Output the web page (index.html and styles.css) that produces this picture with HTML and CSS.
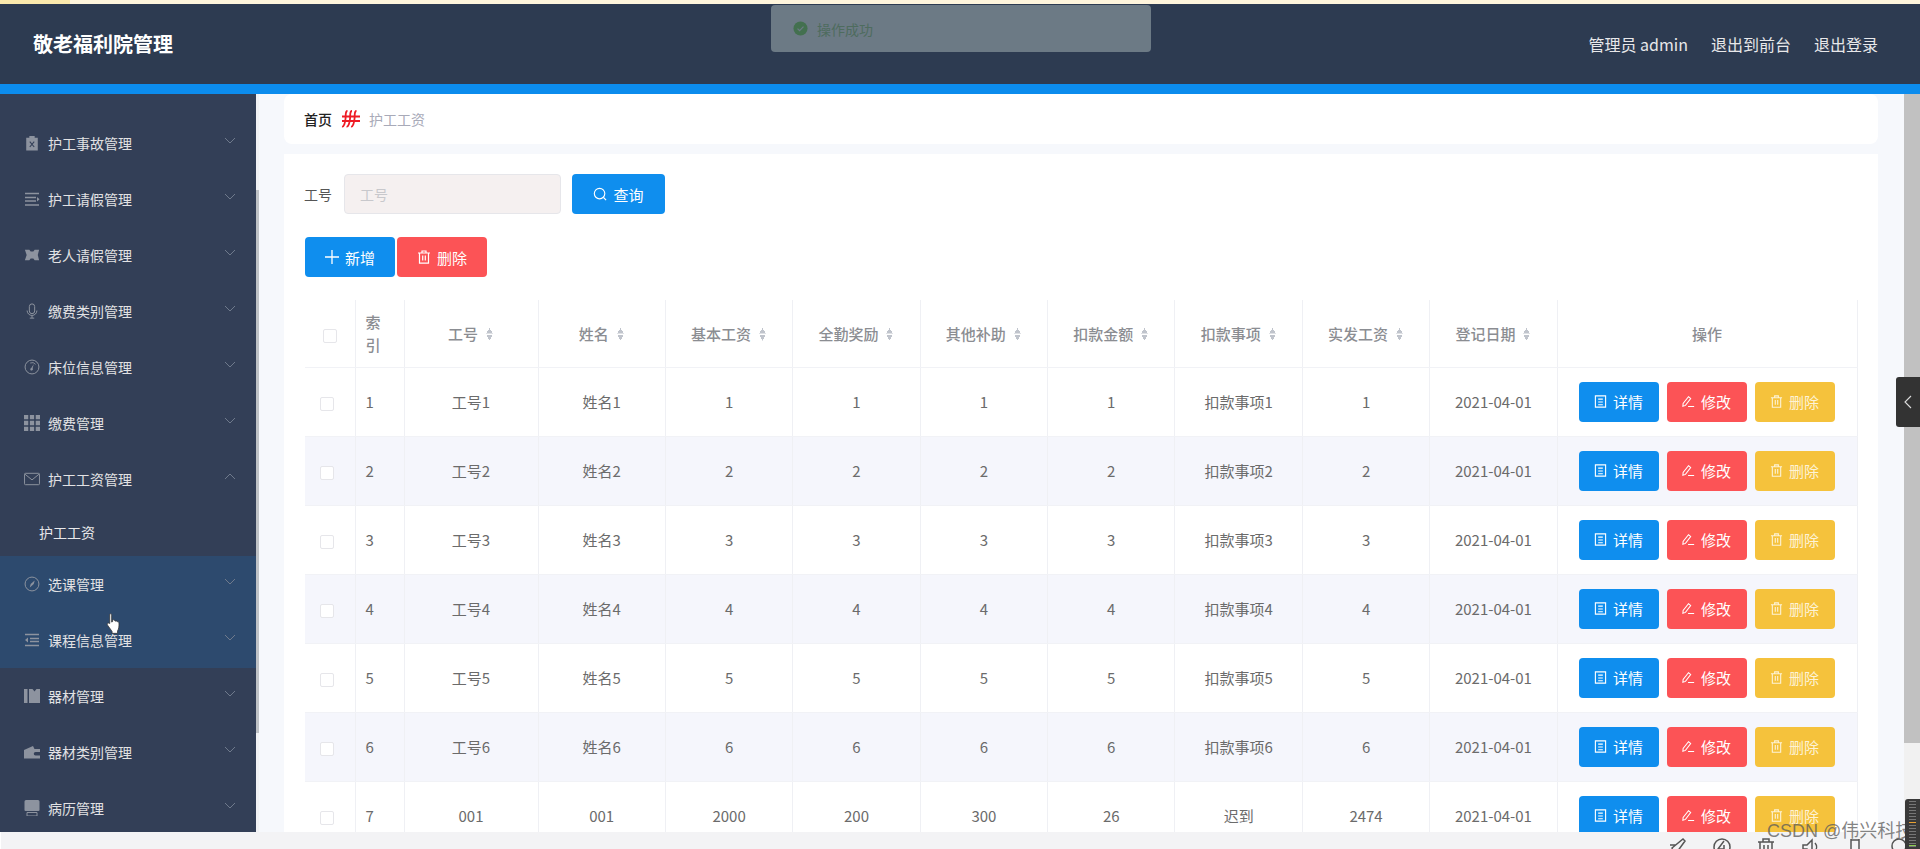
FILE: index.html
```html
<!DOCTYPE html>
<html lang="zh-CN">
<head>
<meta charset="utf-8">
<title>敬老福利院管理</title>
<link rel="stylesheet" href="styles.css">
</head>
<body>
<svg class="defs" width="0" height="0" aria-hidden="true">
  <symbol id="i-clip" viewBox="0 0 16 18"><path d="M5 1h6v2h3.500v14.500h-13V3H5z" fill="currentColor"/><path d="M5.500 7.500l5 6m0-6l-5 6" stroke="#333f57" stroke-width="1.200" fill="none"/></symbol>
  <symbol id="i-list" viewBox="0 0 16 16"><path d="M1 2.500h14M1 6.500h11M1 10h11M1 14h14" stroke="currentColor" stroke-width="1.700" fill="none"/><path d="M13 6l2.500 2.200L13 10.500z" fill="currentColor"/></symbol>
  <symbol id="i-ticket" viewBox="0 0 18 14"><path d="M1 1h5l1.500 2h3L12 1h5l-1.500 6L17 13h-5l-1.500-2h-3L6 13H1l2-6z" fill="currentColor"/></symbol>
  <symbol id="i-mic" viewBox="0 0 16 18"><rect x="5" y="1" width="6" height="11" rx="3" fill="none" stroke="currentColor" stroke-width="1.100"/><path d="M2.500 8.500a5.500 5.500 0 0 0 11 0M8 14v3M5.500 17h5" fill="none" stroke="currentColor" stroke-width="1.100"/></symbol>
  <symbol id="i-gauge" viewBox="0 0 18 18"><circle cx="9" cy="9" r="7.800" fill="none" stroke="currentColor" stroke-width="1.100"/><path d="M7 4.500a5 5 0 0 1 6 1.500" fill="none" stroke="currentColor"/><path d="M11 5.500L9.700 10.500a1.500 1.500 0 1 1-1.500-.5z" fill="currentColor"/></symbol>
  <symbol id="i-grid" viewBox="0 0 15 15"><path d="M0 0h4v4H0zM5.500 0h4v4h-4zM11 0h4v4h-4zM0 5.500h4v4H0zM5.500 5.500h4v4h-4zM11 5.500h4v4h-4zM0 11h4v4H0zM5.500 11h4v4h-4zM11 11h4v4h-4z" fill="currentColor"/></symbol>
  <symbol id="i-mail" viewBox="0 0 18 14"><rect x=".6" y=".6" width="16.800" height="12.800" rx="1" fill="none" stroke="currentColor" stroke-width="1.100"/><path d="M1 1.500l8 6.500 8-6.500" fill="none" stroke="currentColor" stroke-width="1.100"/></symbol>
  <symbol id="i-compass" viewBox="0 0 18 18"><circle cx="9" cy="9" r="7.800" fill="none" stroke="currentColor" stroke-width="1.100"/><path d="M12 5L7.500 9l-1 4 4.500-4z" fill="currentColor"/></symbol>
  <symbol id="i-indent" viewBox="0 0 16 14"><path d="M1 1.500h14M6 5.500h9M6 8.500h9M1 12.500h14" stroke="currentColor" stroke-width="1.700" fill="none"/><path d="M4 4.500L1 7l3 2.500z" fill="currentColor"/></symbol>
  <symbol id="i-book" viewBox="0 0 16 15"><path d="M0 .5h3.500v14H0zM5 .5h3.500L10.500 3 12.500.5H16v14H5z" fill="currentColor"/></symbol>
  <symbol id="i-wallet" viewBox="0 0 16 13"><path d="M0 4.500L9 .5l1.500 3H16v3h-4.500a1.700 1.700 0 0 0 0 3.500H16v3H0z" fill="currentColor"/></symbol>
  <symbol id="i-stall" viewBox="0 0 16 16"><path d="M2 0h12a1.500 1.500 0 0 1 1.500 1.500V10a1 1 0 0 1-1 1h-13a1 1 0 0 1-1-1V1.500A1.500 1.500 0 0 1 2 0z" fill="currentColor"/><path d="M3 12.500h10V16H3z" fill="none" stroke="currentColor" stroke-width="1"/></symbol>
  <symbol id="i-chev" viewBox="0 0 12 7"><path d="M1 1l5 5 5-5" fill="none" stroke="currentColor" stroke-width="1"/></symbol>
  <symbol id="i-doc" viewBox="0 0 14 14"><path d="M1.500 1h11v12h-11zM4.500 4.500h5M4.500 7.500h5M4.500 10.500h5" fill="none" stroke="currentColor" stroke-width="1.200"/></symbol>
  <symbol id="i-edit" viewBox="0 0 15 14"><path d="M7.500 1.500l2.500 2L4 11.500l-3 1 .3-3.300zM7 12.800h7" fill="none" stroke="currentColor" stroke-width="1.200"/></symbol>
  <symbol id="i-trash" viewBox="0 0 14 14"><path d="M1 3h12M5 3V1h4v2M2.500 3v10.200h9V3M5.700 5.500v5M8.300 5.500v5" fill="none" stroke="currentColor" stroke-width="1.200"/></symbol>
</svg>

<div class="strip"><span class="strip-left"></span></div>

<header class="topbar">
  <div class="brand">敬老福利院管理</div>
  <nav class="top-links">
    <span>管理员 admin</span>
    <span>退出到前台</span>
    <span>退出登录</span>
  </nav>
</header>
<div class="accent"></div>

<div class="main">
  <aside class="side">
    <ul class="menu">
      <li class="item"><svg class="ico"><use href="#i-clip"/></svg><span>护工事故管理</span><svg class="chev"><use href="#i-chev"/></svg></li>
      <li class="item"><svg class="ico"><use href="#i-list"/></svg><span>护工请假管理</span><svg class="chev"><use href="#i-chev"/></svg></li>
      <li class="item"><svg class="ico"><use href="#i-ticket"/></svg><span>老人请假管理</span><svg class="chev"><use href="#i-chev"/></svg></li>
      <li class="item"><svg class="ico"><use href="#i-mic"/></svg><span>缴费类别管理</span><svg class="chev"><use href="#i-chev"/></svg></li>
      <li class="item"><svg class="ico"><use href="#i-gauge"/></svg><span>床位信息管理</span><svg class="chev"><use href="#i-chev"/></svg></li>
      <li class="item"><svg class="ico"><use href="#i-grid"/></svg><span>缴费管理</span><svg class="chev"><use href="#i-chev"/></svg></li>
      <li class="item"><svg class="ico"><use href="#i-mail"/></svg><span>护工工资管理</span><svg class="chev up"><use href="#i-chev"/></svg></li>
      <li class="subitem">护工工资</li>
      <li class="item hot"><svg class="ico"><use href="#i-compass"/></svg><span>选课管理</span><svg class="chev"><use href="#i-chev"/></svg></li>
      <li class="item hot"><svg class="ico"><use href="#i-indent"/></svg><span>课程信息管理</span><svg class="chev"><use href="#i-chev"/></svg></li>
      <li class="item"><svg class="ico"><use href="#i-book"/></svg><span>器材管理</span><svg class="chev"><use href="#i-chev"/></svg></li>
      <li class="item"><svg class="ico"><use href="#i-wallet"/></svg><span>器材类别管理</span><svg class="chev"><use href="#i-chev"/></svg></li>
      <li class="item"><svg class="ico"><use href="#i-stall"/></svg><span>病历管理</span><svg class="chev"><use href="#i-chev"/></svg></li>
    </ul>
    <div class="side-scroll"><div class="side-thumb"></div></div>
  </aside>

  <section class="content">
    <div class="crumb">
      <span class="crumb-home">首页</span>
      <svg class="crumb-sep" viewBox="0 0 20 18"><path d="M6.500 1C4 1 5 5 4.500 9S3 17 1 16.500M11 1C8.500 1 9.500 5 9 9s-1.500 8-3.500 7.500M15.500 1C13 1 14 5 13.500 9S12 17 10 16.500M1 6.500h18M1 11h18" fill="none" stroke="#ee1c25" stroke-width="1.800"/></svg>
      <span class="crumb-cur">护工工资</span>
    </div>

    <div class="card">
      <div class="search">
        <label class="search-label">工号</label>
        <div class="fake-input">工号</div>
        <button class="btn blue search-btn"><svg class="b-ico" viewBox="0 0 16 16"><circle cx="7.500" cy="7.500" r="6" fill="none" stroke="currentColor" stroke-width="1.300"/><path d="M12 12l3 3" stroke="currentColor" stroke-width="1.300"/></svg>查询</button>
      </div>
      <div class="actions">
        <button class="btn blue wide"><svg class="b-ico" viewBox="0 0 14 14"><path d="M7 0v14M0 7h14" stroke="currentColor" stroke-width="1.300"/></svg>新增</button>
        <button class="btn red wide"><svg class="b-ico"><use href="#i-trash"/></svg>删除</button>
      </div>

      <table class="grid">
        <colgroup>
          <col class="c-check"><col class="c-index"><col class="c-no"><col class="c-std"><col class="c-std"><col class="c-std"><col class="c-std"><col class="c-std"><col class="c-std"><col class="c-std"><col class="c-std"><col class="c-op">
        </colgroup>
        <thead>
          <tr>
            <th><span class="check"></span></th>
            <th class="idx">索引</th>
            <th>工号<i class="sort"></i></th>
            <th>姓名<i class="sort"></i></th>
            <th>基本工资<i class="sort"></i></th>
            <th>全勤奖励<i class="sort"></i></th>
            <th>其他补助<i class="sort"></i></th>
            <th>扣款金额<i class="sort"></i></th>
            <th>扣款事项<i class="sort"></i></th>
            <th>实发工资<i class="sort"></i></th>
            <th>登记日期<i class="sort"></i></th>
            <th>操作</th>
          </tr>
        </thead>
        <tbody>
          <tr><td class="ck"><span class="check"></span></td><td class="idx">1</td><td>工号1</td><td>姓名1</td><td>1</td><td>1</td><td>1</td><td>1</td><td>扣款事项1</td><td>1</td><td>2021-04-01</td><td><div class="ops"><button class="btn blue op"><svg class="o-ico"><use href="#i-doc"/></svg>详情</button><button class="btn red op"><svg class="o-ico"><use href="#i-edit"/></svg>修改</button><button class="btn yellow op"><svg class="o-ico"><use href="#i-trash"/></svg>删除</button></div></td></tr>
          <tr><td class="ck"><span class="check"></span></td><td class="idx">2</td><td>工号2</td><td>姓名2</td><td>2</td><td>2</td><td>2</td><td>2</td><td>扣款事项2</td><td>2</td><td>2021-04-01</td><td><div class="ops"><button class="btn blue op"><svg class="o-ico"><use href="#i-doc"/></svg>详情</button><button class="btn red op"><svg class="o-ico"><use href="#i-edit"/></svg>修改</button><button class="btn yellow op"><svg class="o-ico"><use href="#i-trash"/></svg>删除</button></div></td></tr>
          <tr><td class="ck"><span class="check"></span></td><td class="idx">3</td><td>工号3</td><td>姓名3</td><td>3</td><td>3</td><td>3</td><td>3</td><td>扣款事项3</td><td>3</td><td>2021-04-01</td><td><div class="ops"><button class="btn blue op"><svg class="o-ico"><use href="#i-doc"/></svg>详情</button><button class="btn red op"><svg class="o-ico"><use href="#i-edit"/></svg>修改</button><button class="btn yellow op"><svg class="o-ico"><use href="#i-trash"/></svg>删除</button></div></td></tr>
          <tr><td class="ck"><span class="check"></span></td><td class="idx">4</td><td>工号4</td><td>姓名4</td><td>4</td><td>4</td><td>4</td><td>4</td><td>扣款事项4</td><td>4</td><td>2021-04-01</td><td><div class="ops"><button class="btn blue op"><svg class="o-ico"><use href="#i-doc"/></svg>详情</button><button class="btn red op"><svg class="o-ico"><use href="#i-edit"/></svg>修改</button><button class="btn yellow op"><svg class="o-ico"><use href="#i-trash"/></svg>删除</button></div></td></tr>
          <tr><td class="ck"><span class="check"></span></td><td class="idx">5</td><td>工号5</td><td>姓名5</td><td>5</td><td>5</td><td>5</td><td>5</td><td>扣款事项5</td><td>5</td><td>2021-04-01</td><td><div class="ops"><button class="btn blue op"><svg class="o-ico"><use href="#i-doc"/></svg>详情</button><button class="btn red op"><svg class="o-ico"><use href="#i-edit"/></svg>修改</button><button class="btn yellow op"><svg class="o-ico"><use href="#i-trash"/></svg>删除</button></div></td></tr>
          <tr><td class="ck"><span class="check"></span></td><td class="idx">6</td><td>工号6</td><td>姓名6</td><td>6</td><td>6</td><td>6</td><td>6</td><td>扣款事项6</td><td>6</td><td>2021-04-01</td><td><div class="ops"><button class="btn blue op"><svg class="o-ico"><use href="#i-doc"/></svg>详情</button><button class="btn red op"><svg class="o-ico"><use href="#i-edit"/></svg>修改</button><button class="btn yellow op"><svg class="o-ico"><use href="#i-trash"/></svg>删除</button></div></td></tr>
          <tr><td class="ck"><span class="check"></span></td><td class="idx">7</td><td>001</td><td>001</td><td>2000</td><td>200</td><td>300</td><td>26</td><td>迟到</td><td>2474</td><td>2021-04-01</td><td><div class="ops"><button class="btn blue op"><svg class="o-ico"><use href="#i-doc"/></svg>详情</button><button class="btn red op"><svg class="o-ico"><use href="#i-edit"/></svg>修改</button><button class="btn yellow op"><svg class="o-ico"><use href="#i-trash"/></svg>删除</button></div></td></tr>
        </tbody>
      </table>
    </div>
  </section>

  <div class="page-scroll"><div class="page-thumb"></div></div>
</div>

<footer class="dock">
  <svg class="dock-ico" viewBox="0 0 20 20"><path d="M5 11L16 2l2 2-8 11-3 1zM3 8h6M10 14v5" fill="none" stroke="currentColor" stroke-width="1.500"/></svg>
  <svg class="dock-ico" viewBox="0 0 20 20"><circle cx="10" cy="10" r="8" fill="none" stroke="currentColor" stroke-width="1.500"/><path d="M12 4L6 12h6M12 8v8" fill="none" stroke="currentColor" stroke-width="1.500"/></svg>
  <svg class="dock-ico" viewBox="0 0 20 20"><path d="M2 5h16M7 5V2h6v3M4 5v13h12V5M8 8v7M12 8v7" fill="none" stroke="currentColor" stroke-width="1.500"/></svg>
  <svg class="dock-ico" viewBox="0 0 20 20"><path d="M2 8h4l5-5v14l-5-5H2zM14 6a6 6 0 0 1 0 8" fill="none" stroke="currentColor" stroke-width="1.500"/></svg>
  <svg class="dock-ico" viewBox="0 0 20 20"><path d="M6 2v16M14 2v16M6 3h8M2 18h16" fill="none" stroke="currentColor" stroke-width="1.500"/></svg>
  <svg class="dock-ico" viewBox="0 0 20 20"><circle cx="9" cy="9" r="7" fill="none" stroke="currentColor" stroke-width="1.500"/><path d="M14 14l5 5" stroke="currentColor" stroke-width="1.500"/></svg>
</footer>

<div class="toast">
  <svg class="toast-ico" viewBox="0 0 16 16"><circle cx="8" cy="8" r="7.500" fill="#43704f"/><path d="M4.800 8.200l2.200 2.200 4.200-4.400" fill="none" stroke="#6c7a85" stroke-width="1.300"/></svg>
  <span>操作成功</span>
</div>

<div class="handle"><svg viewBox="0 0 8 14" class="handle-ico"><path d="M7 1L1 7l6 6" fill="none" stroke="currentColor" stroke-width="1.100"/></svg></div>

<svg class="cursor" viewBox="0 0 16 23"><path d="M4 1.500c1 -.8 2 0 2 1V10l1-.5V8c1-.8 2 -.5 2.300.5l.7.5c1-.6 1.800-.2 2 .7.900-.3 1.700.2 1.800 1.300.2 3 0 6-1.500 8.500v2.500H6.500v-2L1.500 13c-.8-1.500.5-2.500 2.500-1.500z" fill="#fff" stroke="#333" stroke-width=".8"/></svg>

<div class="watermark">CSDN @伟兴科技</div>
<div class="meter"></div>
</body>
</html>
```

FILE: styles.css
```css
* { box-sizing: border-box; }
html, body { margin: 0; padding: 0; height: 849px; overflow: hidden; }
body {
  position: relative;
  display: flex;
  flex-direction: column;
  width: 1920px;
  font-family: "Noto Sans CJK SC", "Noto Sans", sans-serif;
  font-size: 15px;
  color: #666;
  background: #f6f8fc;
}
.defs { position: absolute; }
ul { list-style: none; margin: 0; padding: 0; }
button { font-family: inherit; border: 0; padding: 0; cursor: pointer; }

.strip { height: 4px; background: #fff5dc; flex: none; display: flex; }
.strip-left { width: 70px; background: #fbe9ad; }

.topbar {
  height: 80px;
  flex: none;
  background: #2d3b51;
  display: flex;
  align-items: center;
  justify-content: space-between;
  padding: 0 42px 0 33px;
}
.brand { color: #fff; font-size: 20px; font-weight: 700; line-height: 1; }
.top-links { display: flex; gap: 23px; color: #e8e8ea; font-size: 16px; line-height: 1; }
.accent { height: 10px; flex: none; background: #0c8ced; }

.main { height: 738px; flex: none; display: flex; overflow: hidden; }

.side { width: 259px; flex: none; display: flex; }
.menu { width: 256px; background: #333f57; padding-top: 21px; overflow: hidden; }
.item {
  height: 56px;
  padding-left: 24px;
  display: flex;
  align-items: center;
  color: #e2e2e4;
  font-size: 14px;
  position: relative;
}
.item.hot { background: #2d4a6e; }
.ico { width: 16px; height: 16px; color: #8d939f; flex: none; margin-right: 8px; }
.chev { width: 12px; height: 7px; color: #6f7a8c; position: absolute; left: 224px; top: 22px; }
.chev.up { transform: rotate(180deg); }
.subitem { height: 49px; padding-left: 39px; display: flex; align-items: center; color: #e8e8ea; font-size: 14px; }
.side-scroll { width: 3px; background: #f1f2f5; }
.side-thumb { margin-top: 96px; height: 543px; background: #bfc2c6; }

.content { flex: 1; min-width: 0; padding: 0 26px 0 25px; overflow: hidden; }
.crumb {
  height: 50px;
  background: #fff;
  border-radius: 8px;
  display: flex;
  align-items: center;
  padding-left: 20px;
  font-size: 14px;
}
.crumb-home { color: #222; font-weight: 500; }
.crumb-sep { width: 20px; height: 18px; margin: 0 8px 0 9px; }
.crumb-cur { color: #a8aab8; }

.card { margin-top: 10px; background: #fff; padding: 20px 0 0 20px; height: 700px; }
.search { display: flex; align-items: center; height: 40px; }
.search-label { width: 40px; color: #555; font-size: 14px; }
.fake-input {
  width: 217px;
  height: 40px;
  margin-right: 11px;
  background: #f5f0f0;
  border: 1px solid #e6e6ea;
  border-radius: 4px;
  padding-left: 15px;
  line-height: 38px;
  font-size: 14px;
  color: #c8c8cc;
}
.btn {
  display: inline-flex;
  align-items: center;
  justify-content: center;
  height: 40px;
  border-radius: 4px;
  color: #fff;
  font-size: 15px;
}
.blue { background: #0f8eee; }
.red { background: #fc5356; }
.yellow { background: #f5c23c; color: #fdf3d6; }
.search-btn { width: 93px; }
.b-ico { width: 14px; height: 14px; margin-right: 6px; }
.actions { margin-top: 23px; display: flex; gap: 2px; padding-left: 1px; }
.wide { width: 90px; }

.grid {
  margin: 23px 0 0 1px;
  width: 1552px;
  table-layout: fixed;
  border-collapse: collapse;
  font-size: 15px;
}
.c-check { width: 50px; }
.c-index { width: 49px; }
.c-no { width: 134px; }
.c-std { width: 127.400px; }
.c-op { width: 300px; }
.grid th, .grid td {
  text-align: center;
  padding: 0;
  border-right: 1px solid #eff0f4;
  border-bottom: 1px solid #f1f2f6;
}
.grid th { height: 67px; color: #8b8d92; font-weight: 500; line-height: 23px; }
.grid td { height: 69px; color: #6b6b6b; }
.grid tbody tr:nth-child(even) td { background: #f5f6fc; }
.grid .idx { text-align: left; padding: 0 14px 0 10px; }
.grid .ck { padding-right: 5px; }
.check {
  display: inline-block;
  width: 14px;
  height: 14px;
  vertical-align: middle;
  background: #fff;
  border: 1px solid #e6e6ea;
  border-radius: 2px;
}
.sort {
  display: inline-block;
  width: 9px;
  height: 13px;
  margin-left: 7px;
  vertical-align: -1px;
  background:
    conic-gradient(from 150deg at 50% 0, #c0c4cc 60deg, transparent 0) 0 0 / 9px 5.500px no-repeat,
    conic-gradient(from -30deg at 50% 100%, #c0c4cc 60deg, transparent 0) 0 100% / 9px 5.500px no-repeat;
}
.ops { display: flex; gap: 8px; justify-content: flex-start; padding-left: 21px; }
.op { width: 80px; }
.o-ico { width: 13px; height: 13px; margin-right: 6px; }

.page-scroll { width: 16px; flex: none; background: #f1f1f1; }
.page-thumb { height: 649px; background: #c1c1c1; }

.dock {
  height: 17px;
  flex: none;
  background: #f3f3f5;
  border-left: 1px solid #fff;
  display: flex;
  justify-content: flex-end;
  gap: 24.600px;
  padding: 5px 10px 0 0;
  overflow: hidden;
  color: #555;
}
.dock-ico { width: 20px; height: 20px; flex: none; }

.toast {
  position: absolute;
  left: 771px;
  top: 5px;
  width: 380px;
  height: 47px;
  border-radius: 4px;
  background: #6c7a85;
  display: flex;
  align-items: center;
  padding-left: 22px;
  color: #4e6c5e;
  font-size: 14px;
}
.toast-ico { width: 15px; height: 15px; margin-right: 9px; }

.handle {
  position: absolute;
  left: 1896px;
  top: 377px;
  width: 24px;
  height: 50px;
  background: #333;
  border-radius: 3px 0 0 3px;
  display: flex;
  align-items: center;
  justify-content: center;
  color: #ddd;
}
.handle-ico { width: 8px; height: 14px; }

.cursor { position: absolute; left: 106px; top: 612px; width: 15px; height: 23px; }

.watermark {
  position: absolute;
  left: 1767px;
  top: 818px;
  font-family: "Liberation Sans", "Noto Sans CJK SC", sans-serif;
  font-size: 18px;
  line-height: 26px;
  color: rgba(90, 90, 90, .75);
  white-space: nowrap;
}
.meter {
  position: absolute;
  left: 1905px;
  top: 799px;
  width: 15px;
  height: 50px;
  border-radius: 3px 0 0 0;
  background:
    linear-gradient(#e8a030, #e8a030) 50% 23px / 7px 1px no-repeat,
    linear-gradient(#8ccc50, #8ccc50) 50% 46px / 7px 1px no-repeat,
    repeating-linear-gradient(#3a3a3a 0 2px, #777 2px 3px) 50% 0 / 7px 100% no-repeat,
    #3a3a3a;
}
```
